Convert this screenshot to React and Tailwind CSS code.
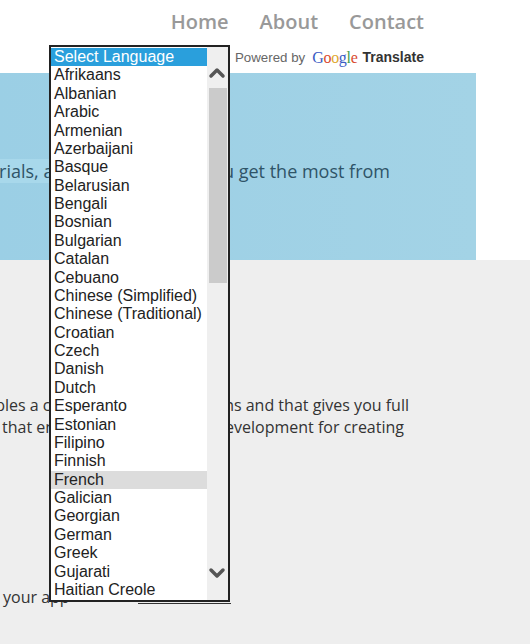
import { ChevronUp, ChevronDown } from 'lucide-react';

const languages = [
  'Afrikaans', 'Albanian', 'Arabic', 'Armenian', 'Azerbaijani', 'Basque', 'Belarusian', 'Bengali',
  'Bosnian', 'Bulgarian', 'Catalan', 'Cebuano', 'Chinese (Simplified)', 'Chinese (Traditional)',
  'Croatian', 'Czech', 'Danish', 'Dutch', 'Esperanto', 'Estonian', 'Filipino', 'Finnish', 'French',
  'Galician', 'Georgian', 'German', 'Greek', 'Gujarati', 'Haitian Creole',
];

const LanguageList = () => (
  <div className="absolute left-[49px] top-[45px] z-10 flex h-[557px] w-[181px] border-2 border-[#222] bg-white font-['Liberation_Sans',sans-serif] text-[16px] leading-[18.38px] text-[#222]">
    <ul className="w-[156px] overflow-hidden pt-[1px]">
      <li className="bg-[#2a9fdc] pl-[3px] text-white">Select Language</li>
      {languages.map((lang) => (
        <li key={lang} className={lang === 'French' ? 'whitespace-nowrap bg-[#dcdcdc] pl-[3px]' : 'whitespace-nowrap pl-[3px]'}>
          {lang}
        </li>
      ))}
    </ul>
    <div className="relative flex w-[21px] flex-col items-end bg-[#efefef] pr-[1px] pt-[14px]">
      <ChevronUp className="-mr-[2px] h-[24px] w-[24px] shrink-0 text-[#555]" strokeWidth={3.5} />
      <div className="mt-[3px] h-[195px] w-[18px] bg-[#cbcbcb]" />
      <ChevronDown className="absolute bottom-[15px] -right-[1px] h-[24px] w-[24px] text-[#555]" strokeWidth={3.5} />
    </div>
  </div>
);

export default function App() {
  return (
    <div className="relative h-[644px] w-[530px] overflow-hidden bg-white font-['Open_Sans',sans-serif]">
      <nav className="flex h-[45px] justify-end gap-[31px] pr-[106px] pt-[8px] text-[20px] font-semibold leading-[28px] text-[#999]">
        <a>Home</a>
        <a>About</a>
        <a>Contact</a>
      </nav>
      <div className="flex h-[28px] items-center justify-end pb-[3px] pr-[106px] font-['Liberation_Sans',sans-serif] text-[13.3px]">
        <span className="text-[#666]">Powered by</span>
        <span className="ml-[7px] font-['Liberation_Serif',serif] text-[16px] leading-none tracking-[-0.3px]">
          <span className="text-[#3b5cc4]">G</span>
          <span className="text-[#d9492f]">o</span>
          <span className="text-[#e0a82e]">o</span>
          <span className="text-[#3b5cc4]">g</span>
          <span className="text-[#3f9b4d]">l</span>
          <span className="text-[#d9492f]">e</span>
        </span>
        <span className="ml-[5px] text-[14px] font-bold text-[#333]">Translate</span>
      </div>
      <section className="h-[187px] w-[476px] bg-linear-to-r from-[#9bcfe5] to-[#a3d3e6] pt-[86px] text-[18px] leading-[24px] text-[#2f5468]">
        <p className="flex w-[390px] justify-end whitespace-nowrap">
          <span className="bg-[#a8d8eb]">tutorials, and guides</span>
          <span>&nbsp;to help you get the most from</span>
        </p>
      </section>
      <section className="h-[384px] bg-[#eeeeee] pt-[134px] text-[16px] leading-[22px] text-[#333]">
        <p className="flex w-[409px] justify-end whitespace-nowrap">enables a clean partition of concerns and that gives you full</p>
        <p className="flex w-[404px] justify-end whitespace-nowrap">features, that enable fast, TDD-driven development for creating</p>
        <p className="mt-[148px] flex items-start whitespace-nowrap pl-[3px]">
          your app
          <span className="ml-[68px] h-[18px] w-[93px] border-b border-[#333]" />
        </p>
      </section>
      <LanguageList />
    </div>
  );
}
